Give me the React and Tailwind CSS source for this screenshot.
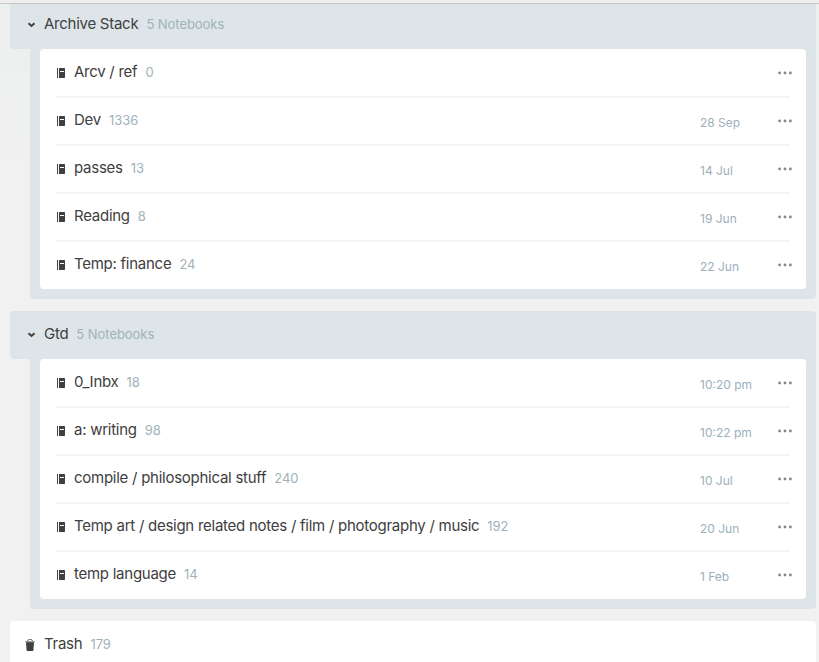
const stacks = [
  {
    name: 'Archive Stack',
    notebooks: [
      { name: 'Arcv / ref', count: 0 },
      { name: 'Dev', count: 1336, date: '28 Sep' },
      { name: 'passes', count: 13, date: '14 Jul' },
      { name: 'Reading', count: 8, date: '19 Jun' },
      { name: 'Temp: finance', count: 24, date: '22 Jun' },
    ],
  },
  {
    name: 'Gtd',
    notebooks: [
      { name: '0_Inbx', count: 18, date: '10:20 pm' },
      { name: 'a: writing', count: 98, date: '10:22 pm' },
      { name: 'compile / philosophical stuff', count: 240, date: '10 Jul' },
      { name: 'Temp art / design related notes / film / photography / music', count: 192, date: '20 Jun' },
      { name: 'temp language', count: 14, date: '1 Feb' },
    ],
  },
];

function Chevron() {
  return (
    <svg className="ml-[17px] mt-0.5 h-[6px] w-[9px] shrink-0" viewBox="0 0 9 6" fill="none" stroke="#404040" strokeWidth="2">
      <path d="M1.500 1.200 4.500 4 7.500 1.200" />
    </svg>
  );
}

function NotebookIcon() {
  return (
    <svg className="h-[10px] w-[8px] shrink-0" viewBox="0 0 8 10" fill="#404040">
      <path d="M0 0h1v10H0zM2 0h5.300a.7.7 0 0 1 .7.7v8.600a.7.7 0 0 1-.7.7H2z" />
      <path fill="#fff" d="M3 3h4v1H3z" />
    </svg>
  );
}

function TrashIcon() {
  return (
    <svg className="ml-[15px] mt-0.5 h-[12px] w-[10px] shrink-0" viewBox="0 0 10 12">
      <path fill="#404040" d="M1 4h8l-.6 7.200a.9.9 0 0 1-.9.8h-5a.9.9 0 0 1-.9-.8z" />
      <path fill="#a0a0a0" d="M0 2h10v1H0z" />
      <path fill="#606060" d="M1 3h8v1H1z" />
      <path fill="#858585" d="M3 0h4v1H3zM2 1h1.500v1H2zM6.500 1H8v1H6.500z" />
    </svg>
  );
}

function Dots() {
  return (
    <svg className="h-[4px] w-[14px] shrink-0" viewBox="0 0 14 4" fill="#858585">
      <circle cx="1.600" cy="2" r="1.400" />
      <circle cx="7" cy="2" r="1.400" />
      <circle cx="12.400" cy="2" r="1.400" />
    </svg>
  );
}

function Label({ name, count }) {
  return (
    <div className="flex items-baseline gap-2 whitespace-nowrap">
      <span className="text-[15px] leading-5 tracking-[-0.26px] text-[#404040]">{name}</span>
      <span className="text-[13px] leading-5 tracking-[-0.05px] text-[#a1b2ba]">{count}</span>
    </div>
  );
}

function Notebook({ name, count, date }) {
  return (
    <li className="mr-4 ml-4 -mt-px flex h-[49px] items-center border-t-2 border-[#f5f5f5] pb-px first:mt-0 first:h-12 first:border-0 first:pb-0">
      <div className="flex flex-1 items-center gap-[9px] pl-px">
        <NotebookIcon />
        <div className="mb-0.5">
          <Label name={name} count={count} />
        </div>
      </div>
      <span className="mt-[3px] w-[78px] text-[12px] leading-5 whitespace-nowrap text-[#9bb0bb]">{date}</span>
      <div className="-mr-0.5 flex">
        <Dots />
      </div>
    </li>
  );
}

function Stack({ stack, first }) {
  return (
    <section>
      <header className={`flex items-center rounded-bl bg-[#dde5e8] ${first ? 'h-[45px] pb-[5px]' : 'h-12 rounded-t pb-0.5'}`}>
        <Chevron />
        <div className="ml-2">
          <Label name={stack.name} count={`${stack.notebooks.length} Notebooks`} />
        </div>
      </header>
      <div className="ml-5 rounded-b bg-[#dde5e8] px-2.5 pb-2.5">
        <ul className="rounded bg-white">
          {stack.notebooks.map((n) => (
            <Notebook key={n.name} {...n} />
          ))}
        </ul>
      </div>
    </section>
  );
}

export default function App() {
  return (
    <div className="flex h-[662px] w-[819px] flex-col overflow-hidden bg-[#f1f1f1] bg-linear-to-b from-[#ecefee] to-[#f1f1f1] to-[160px] font-['Inter',sans-serif]">
      <div className="h-1 shrink-0 border-b border-[#c8c8cb] bg-[#eeeeee]" />
      <main className="ml-2.5 flex w-[806px] flex-col gap-3">
        {stacks.map((s, i) => (
          <Stack key={s.name} stack={s} first={i === 0} />
        ))}
        <div className="flex h-12 items-center rounded bg-white pb-0.5">
          <TrashIcon />
          <div className="ml-[9px]">
            <Label name="Trash" count={179} />
          </div>
        </div>
      </main>
    </div>
  );
}
